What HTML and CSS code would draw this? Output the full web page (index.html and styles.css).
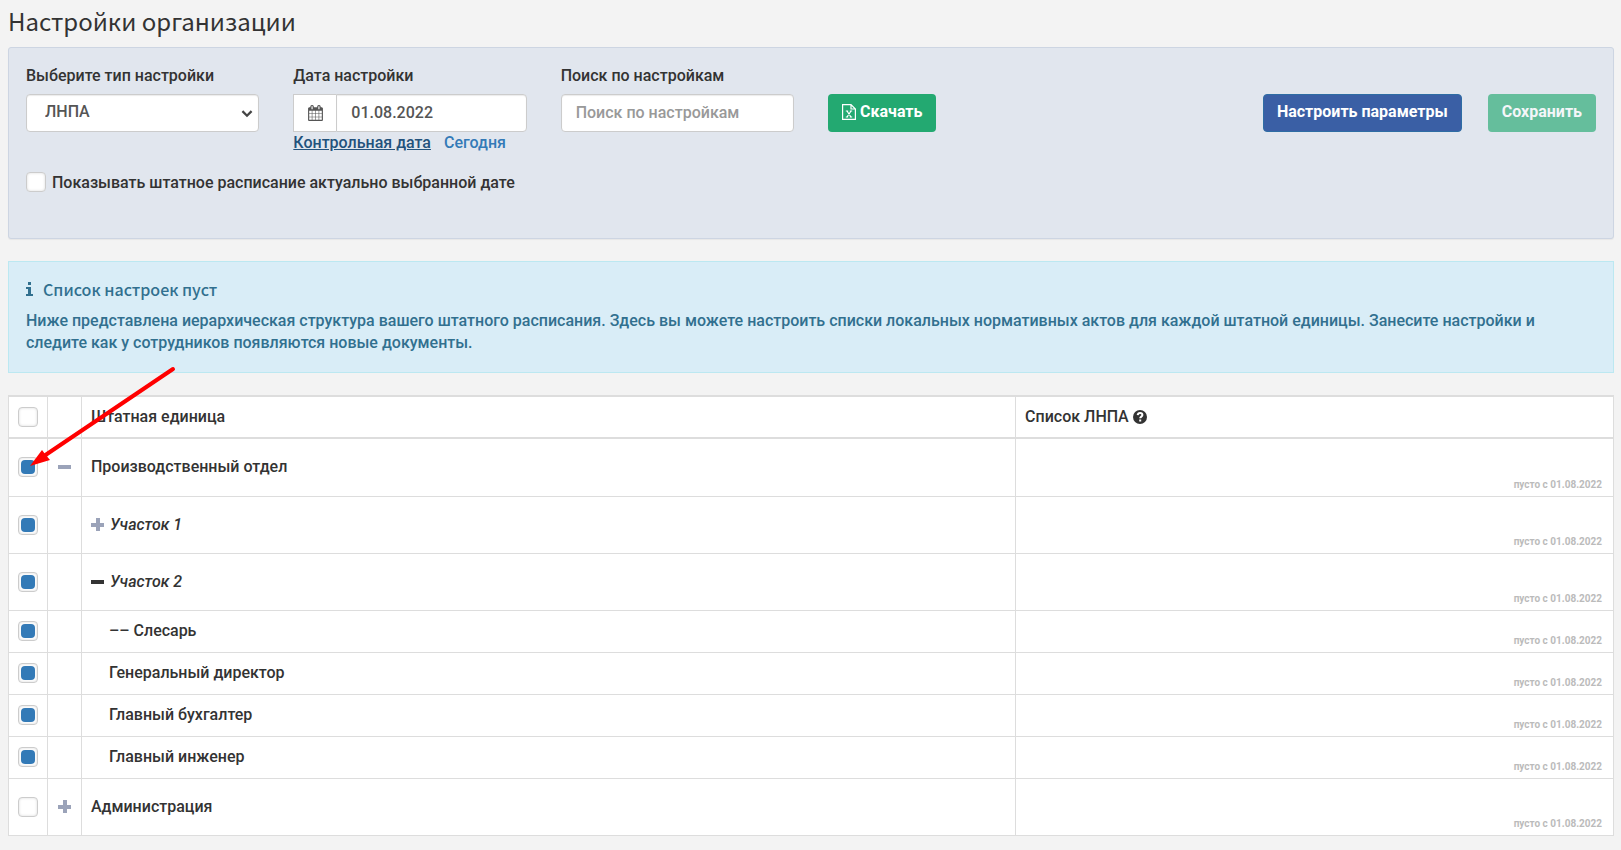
FILE: index.html
```html
<!DOCTYPE html>
<html lang="ru">
<head>
    <meta charset="UTF-8">
    <meta name="viewport" content="width=device-width, initial-scale=1.0">
    <title>Настройки организации</title>
    <link rel="stylesheet" href="styles.css">
</head>
<body>
    <h1 class="page-title">Настройки организации</h1>

    <form class="panel">
        <div class="filters">
            <div class="field">
                <label for="type">Выберите тип настройки</label>
                <div class="select-wrap">
                    <select id="type" class="control">
                        <option>ЛНПА</option>
                    </select>
                    <svg class="chevron" viewBox="0 0 10 7"><path d="M1 1l4 4 4-4"/></svg>
                </div>
            </div>

            <div class="field">
                <label for="date">Дата настройки</label>
                <div class="input-group">
                    <span class="addon">
                        <svg class="icon-calendar" viewBox="0 0 1664 1792"><path d="M128 1664h288v-288h-288v288zm352 0h320v-288h-320v288zm-352-352h288v-320h-288v320zm352 0h320v-320h-320v320zm-352-384h288v-288h-288v288zm736 736h320v-288h-320v288zm-384-736h320v-288h-320v288zm768 736h288v-288h-288v288zm-384-352h320v-320h-320v320zm-352-864v-288q0-13-9.500-22.500t-22.500-9.500h-64q-13 0-22.500 9.500t-9.500 22.500v288q0 13 9.500 22.500t22.500 9.500h64q13 0 22.500-9.500t9.500-22.500zm736 864h288v-320h-288v320zm-384-384h320v-288h-320v288zm384 0h288v-288h-288v288zm32-480v-288q0-13-9.500-22.500t-22.500-9.500h-64q-13 0-22.500 9.500t-9.500 22.500v288q0 13 9.500 22.500t22.500 9.500h64q13 0 22.500-9.500t9.500-22.500zm384-64v1280q0 52-38 90t-90 38h-1408q-52 0-90-38t-38-90v-1280q0-52 38-90t90-38h128v-96q0-66 47-113t113-47h64q66 0 113 47t47 113v96h384v-96q0-66 47-113t113-47h64q66 0 113 47t47 113v96h128q52 0 90 38t38 90z"/></svg>
                    </span>
                    <input id="date" class="control" type="text" value="01.08.2022">
                </div>
                <div class="date-links">
                    <a href="#" class="current">Контрольная дата</a>
                    <a href="#">Сегодня</a>
                </div>
            </div>

            <div class="field">
                <label for="search">Поиск по настройкам</label>
                <input id="search" class="control" type="text" placeholder="Поиск по настройкам">
            </div>

            <button type="button" class="btn btn-success">
                <svg class="icon-excel" viewBox="0 0 14 16"><path d="M.6.6h8.400l4.400 4.400v10.400H.6zM9 .6v4.400h4.400"/><path d="M3.800 7h2.400M7.800 7h2.400M3.800 13h2.400M7.800 13h2.400M5 7l4 6M9 7l-4 6"/></svg>
                Скачать
            </button>

            <div class="actions">
                <button type="button" class="btn btn-primary">Настроить параметры</button>
                <button type="button" class="btn btn-success" disabled>Сохранить</button>
            </div>
        </div>

        <label class="check-line">
            <input type="checkbox" class="check">
            Показывать штатное расписание актуально выбранной дате
        </label>
    </form>

    <div class="alert">
        <h4>
            <svg class="icon-info" viewBox="0 0 7 14"><path d="M2 0h3v3H2zM0 5h5v7h2v2H0v-2h2V7H0z"/></svg>
            Список настроек пуст
        </h4>
        <p>Ниже представлена иерархическая структура вашего штатного расписания. Здесь вы можете настроить списки локальных нормативных актов для каждой штатной единицы. Занесите настройки и следите как у сотрудников появляются новые документы.</p>
    </div>

    <div class="table-wrap">
        <table class="units">
            <colgroup>
                <col class="col-check">
                <col class="col-toggle">
                <col class="col-unit">
                <col>
            </colgroup>
            <thead>
                <tr>
                    <th><input type="checkbox" class="check" aria-label="Выбрать все"></th>
                    <th></th>
                    <th>Штатная единица</th>
                    <th>Список ЛНПА <svg class="icon-help" viewBox="0 0 14 14"><circle cx="7" cy="7" r="7"/><path d="M4.700 5.200C4.900 3.500 6 3 7.100 3c1.300 0 2.300.8 2.300 2 0 1.600-2.200 1.600-2.200 3.300M7.200 9.500v2"/></svg></th>
                </tr>
            </thead>
            <tbody>
                <tr class="group">
                    <td><input type="checkbox" class="check" aria-label="Производственный отдел" checked></td>
                    <td><button type="button" class="toggle minus" aria-label="Свернуть"></button></td>
                    <td>Производственный отдел</td>
                    <td class="empty">пусто с 01.08.2022</td>
                </tr>
                <tr class="group">
                    <td><input type="checkbox" class="check" aria-label="Участок 1" checked></td>
                    <td></td>
                    <td><div class="sub"><button type="button" class="toggle plus" aria-label="Развернуть"></button><em>Участок 1</em></div></td>
                    <td class="empty">пусто с 01.08.2022</td>
                </tr>
                <tr class="group">
                    <td><input type="checkbox" class="check" aria-label="Участок 2" checked></td>
                    <td></td>
                    <td><div class="sub"><button type="button" class="toggle minus dark" aria-label="Свернуть"></button><em>Участок 2</em></div></td>
                    <td class="empty">пусто с 01.08.2022</td>
                </tr>
                <tr>
                    <td><input type="checkbox" class="check" aria-label="Слесарь" checked></td>
                    <td></td>
                    <td class="post">–– Слесарь</td>
                    <td class="empty">пусто с 01.08.2022</td>
                </tr>
                <tr>
                    <td><input type="checkbox" class="check" aria-label="Генеральный директор" checked></td>
                    <td></td>
                    <td class="post">Генеральный директор</td>
                    <td class="empty">пусто с 01.08.2022</td>
                </tr>
                <tr>
                    <td><input type="checkbox" class="check" aria-label="Главный бухгалтер" checked></td>
                    <td></td>
                    <td class="post">Главный бухгалтер</td>
                    <td class="empty">пусто с 01.08.2022</td>
                </tr>
                <tr>
                    <td><input type="checkbox" class="check" aria-label="Главный инженер" checked></td>
                    <td></td>
                    <td class="post">Главный инженер</td>
                    <td class="empty">пусто с 01.08.2022</td>
                </tr>
                <tr class="group">
                    <td><input type="checkbox" class="check" aria-label="Администрация"></td>
                    <td><button type="button" class="toggle plus" aria-label="Развернуть"></button></td>
                    <td>Администрация</td>
                    <td class="empty">пусто с 01.08.2022</td>
                </tr>
            </tbody>
        </table>

        <!-- red pointer to the first ticked row -->
        <svg class="arrow" viewBox="0 0 146 102">
            <path d="M143 4L14 91" fill="none" stroke="#f00" stroke-width="4" stroke-linecap="round"/>
            <path d="M0 101L12 85 15 89 20 95z" fill="#f00"/>
        </svg>
    </div>
</body>
</html>
```

FILE: styles.css
```css
* {
    box-sizing: border-box;
}

body {
    margin: 0;
    padding: 6px 7px 16px 8px;
    background: #f3f3f3;
    color: #333;
    font-family: Roboto, "Liberation Sans", sans-serif;
    font-size: 16px;
    font-weight: 500;
    line-height: 22px;
}

.page-title {
    margin: 0 0 11px;
    font-family: "Noto Sans CJK SC", "Noto Sans", sans-serif;
    font-size: 24px;
    font-weight: 400;
    line-height: 30px;
}

.panel {
    padding: 17px 17px 44px;
    background: #e1e6ee;
    border: 1px solid #cdd5e2;
    border-radius: 3px;
    box-shadow: 0 1px 1px rgba(0, 0, 0, 0.05);
}

.filters {
    display: flex;
    align-items: flex-start;
    gap: 34px;
}

.field {
    width: calc((100% - 170px) / 6);
}

.field label {
    display: block;
    margin-bottom: 7px;
}

.control {
    display: block;
    width: 100%;
    height: 38px;
    padding: 6px 14px 8px;
    background: #fff;
    border: 1px solid #ccc;
    border-radius: 4px;
    box-shadow: inset 0 1px 1px rgba(0, 0, 0, 0.08);
    color: #555;
    font: inherit;
}

.control::placeholder {
    color: #999;
    opacity: 1;
}

.select-wrap {
    position: relative;
}

select.control {
    padding-left: 18px;
    appearance: none;
}

.chevron {
    position: absolute;
    top: 16px;
    right: 6px;
    width: 12px;
    height: 8px;
    fill: none;
    stroke: #444;
    stroke-width: 2;
    pointer-events: none;
}

.input-group {
    display: flex;
}

.input-group .control {
    flex: 1;
    min-width: 0;
    border-radius: 0 4px 4px 0;
}

.addon {
    display: flex;
    align-items: center;
    justify-content: center;
    width: 43px;
    background: #fff;
    border: 1px solid #ccc;
    border-right: none;
}

.icon-calendar {
    width: 15px;
    height: 16px;
    fill: #555;
}

.date-links {
    display: flex;
    gap: 13px;
}

a {
    color: #337ab7;
    text-decoration: none;
}

a.current {
    color: #23527c;
    text-decoration: underline;
}

.btn {
    display: flex;
    align-items: center;
    gap: 4px;
    height: 38px;
    margin-top: 29px;
    padding: 0 13px 2px;
    border: 1px solid transparent;
    border-radius: 4px;
    color: #fff;
    font: inherit;
    font-weight: 700;
    white-space: nowrap;
    cursor: pointer;
}

.btn-success {
    background: #23a971;
}

.btn-primary {
    background: #3a5fa5;
    border-color: #2e6da4;
}

.btn:disabled {
    opacity: 0.65;
    cursor: default;
}

.icon-excel {
    width: 14px;
    height: 16px;
    fill: none;
    stroke: #fff;
    stroke-width: 1.2;
}

.actions {
    display: flex;
    gap: 26px;
    margin-left: auto;
}

.check-line {
    display: flex;
    align-items: flex-start;
    gap: 6px;
    width: fit-content;
    margin-top: 18px;
}

.check {
    display: flex;
    align-items: center;
    justify-content: center;
    flex: none;
    width: 20px;
    height: 20px;
    margin: 0;
    background: #fff;
    border: 1px solid #ccc;
    border-radius: 4px;
    box-shadow: inset 0 0 3px rgba(0, 0, 0, 0.15);
    appearance: none;
}

.check:checked::before {
    content: '';
    width: 14px;
    height: 14px;
    background: #337ab7;
    border-radius: 4px;
}

.alert {
    margin: 22px 0;
    padding: 16px 17px 18px;
    background: #d9edf7;
    border: 1px solid #bce8f1;
    color: #31708f;
}

.alert h4 {
    display: flex;
    align-items: center;
    gap: 10px;
    margin: 0 0 10px;
    font-family: "Noto Sans CJK SC", "Noto Sans", sans-serif;
    font-size: 16px;
    font-weight: 500;
    line-height: 22px;
}

.alert p {
    margin: 0;
}

.icon-info {
    width: 7px;
    height: 14px;
    fill: #31708f;
}

.table-wrap {
    position: relative;
}

.units {
    width: 100%;
    table-layout: fixed;
    border-collapse: collapse;
    background: #fff;
}

.col-check {
    width: 39px;
}

.col-toggle {
    width: 34px;
}

.col-unit {
    width: 58.2%;
}

.units th,
.units td {
    height: 42px;
    padding: 0 9px;
    border: 1px solid #ddd;
    font-weight: 500;
    text-align: left;
}

.units th {
    border-top-width: 2px;
    border-bottom-width: 2px;
}

.units .group td {
    height: 57px;
}

.units .group:first-child td {
    height: 58px;
}

.units .post {
    padding-left: 27px;
}

.units .empty {
    padding: 0 11px 3px;
    color: #bbb;
    font-size: 10px;
    font-weight: 700;
    line-height: 16px;
    text-align: right;
    vertical-align: bottom;
}

.sub {
    display: flex;
    align-items: center;
    gap: 6px;
}

/* plus and minus marks */
.toggle {
    display: block;
    width: 13px;
    height: 13px;
    margin: 0 auto;
    padding: 0;
    background: linear-gradient(#9ba3b9, #9ba3b9) center / 13px 4px no-repeat;
    border: none;
    cursor: pointer;
}

.sub .toggle {
    margin: 0;
}

.toggle.plus {
    background:
        linear-gradient(#9ba3b9, #9ba3b9) center / 13px 4px no-repeat,
        linear-gradient(#9ba3b9, #9ba3b9) center / 4px 13px no-repeat;
}

.toggle.dark {
    background-image: linear-gradient(#333, #333);
}

.icon-help {
    width: 14px;
    height: 14px;
    vertical-align: -2px;
    fill: #333;
}

.icon-help path {
    fill: none;
    stroke: #fff;
    stroke-width: 2;
}

.arrow {
    position: absolute;
    top: -30px;
    left: 22px;
    width: 146px;
    height: 102px;
    pointer-events: none;
}
```
